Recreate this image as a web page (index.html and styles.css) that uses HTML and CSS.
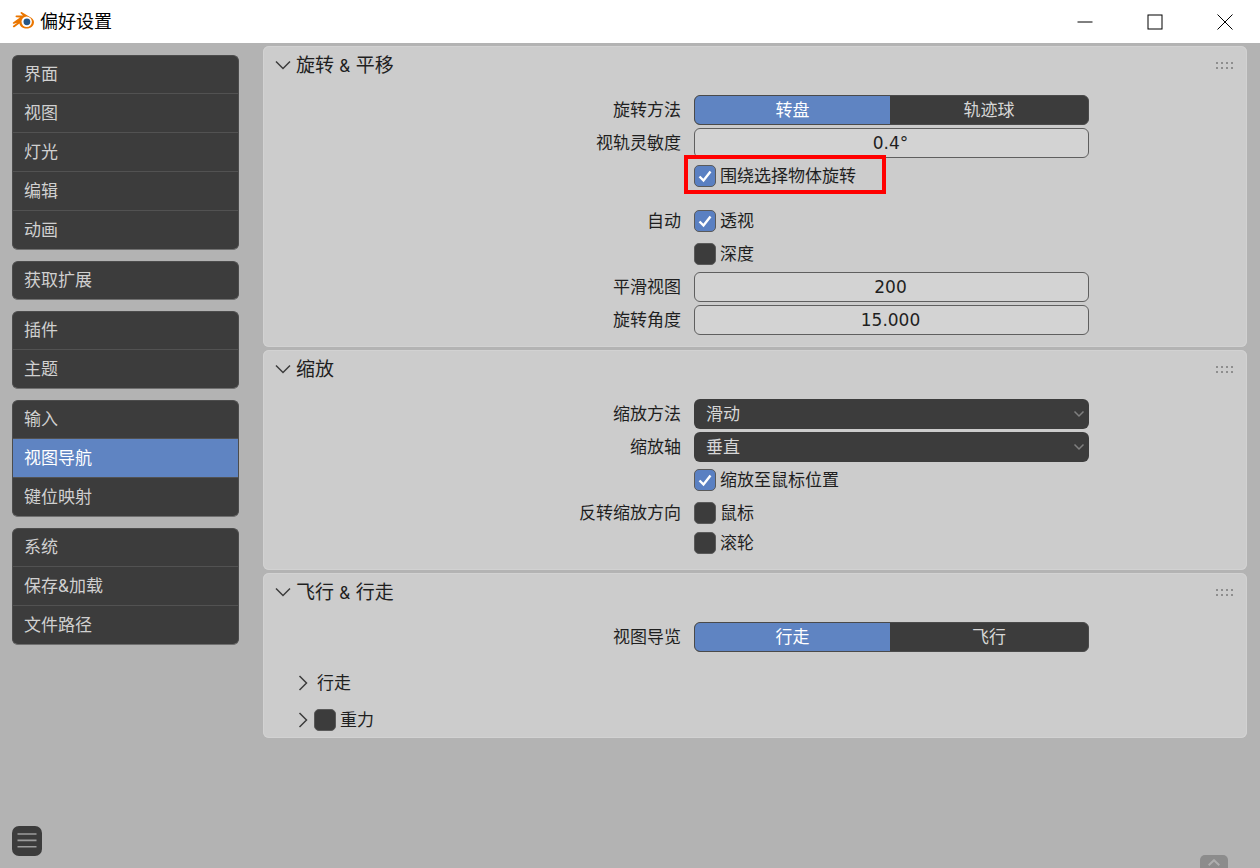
FILE: index.html
```html
<!DOCTYPE html>
<html lang="zh-CN">
<head>
<meta charset="utf-8">
<title>偏好设置</title>
<link rel="stylesheet" href="styles.css">
</head>
<body>
<header class="titlebar">
  <svg class="logo" viewBox="0 0 22 18" width="22" height="18">
    <path d="M1 11.5L8 6.5L4.3 6.3C3.3 6.2 3.3 4.6 4.3 4.5L11 4.5L8.8 2.6C8 1.8 9 0.6 10 1.2L17.5 5.8C20 7.2 22 8.8 22 11C22 14.8 18.8 17.6 14.7 17.6C11 17.6 8 15.6 7.4 12.6L2.4 16.2C1.4 16.8 0.3 15.6 1.2 14.8L5.3 11.8L2 12.8C1 13 0.4 12 1 11.5Z" fill="#ea7600"/>
    <circle cx="14.7" cy="10.8" r="5.2" fill="#fff"/>
    <circle cx="14.9" cy="10.8" r="3.4" fill="#265787"/>
  </svg>
  <span class="title">偏好设置</span>
  <div class="winctl">
    <svg viewBox="0 0 16 16" width="16" height="16"><path d="M0.5 8H15.5" stroke="#000" fill="none"/></svg>
    <svg viewBox="0 0 16 16" width="16" height="16"><rect x="1" y="1" width="14" height="14" stroke="#000" fill="none"/></svg>
    <svg viewBox="0 0 16 16" width="16" height="16"><path d="M0.5 0.5L15.5 15.5M15.5 0.5L0.5 15.5" stroke="#000" fill="none"/></svg>
  </div>
</header>
<div class="app">
  <nav class="sidebar">
    <div class="navgroup">
      <div class="navitem"><span>界面</span></div><div class="navitem"><span>视图</span></div><div class="navitem"><span>灯光</span></div><div class="navitem"><span>编辑</span></div><div class="navitem"><span>动画</span></div>
    </div>
    <div class="navgroup"><div class="navitem"><span>获取扩展</span></div></div>
    <div class="navgroup"><div class="navitem"><span>插件</span></div><div class="navitem"><span>主题</span></div></div>
    <div class="navgroup">
      <div class="navitem"><span>输入</span></div><div class="navitem active"><span>视图导航</span></div><div class="navitem"><span>键位映射</span></div>
    </div>
    <div class="navgroup">
      <div class="navitem"><span>系统</span></div><div class="navitem"><span>保存&amp;加载</span></div><div class="navitem"><span>文件路径</span></div>
    </div>
    <button class="menu-btn" aria-label="菜单">
      <svg viewBox="0 0 30 30" width="30" height="30"><path d="M5.5 8H24.5M5.5 14.4H24.5M5.5 20.8H24.5" stroke="#9c9c9c" stroke-width="1.6" fill="none"/></svg>
    </button>
  </nav>
  <main class="content">
    <section class="panel panel-rot">
      <div class="panel-head">
        <svg class="chev" viewBox="0 0 16 10" width="16" height="10"><path d="M1 1.5L8 8.5L15 1.5" stroke="#3c3c3c" stroke-width="1.5" fill="none"/></svg>
        <h2>旋转 <span class="amp">&amp;</span> 平移</h2>
        <svg class="grip" viewBox="0 0 18 7" width="18" height="7"><use href="#dots"/></svg>
      </div>
      <div class="row">
        <label>旋转方法</label>
        <div class="seg"><span class="on">转盘</span><span>轨迹球</span></div>
      </div>
      <div class="row">
        <label>视轨灵敏度</label>
        <div class="field">0.4°</div>
      </div>
      <div class="row">
        <label></label>
        <div class="check-wrap">
          <span class="box on"><svg viewBox="0 0 22 22" width="22" height="22"><path d="M5.5 11.5L9.5 15.5L16.5 6.5" stroke="#fff" stroke-width="2.4" fill="none"/></svg></span>
          <span class="check-text">围绕选择物体旋转</span>
          <span class="highlight"></span>
        </div>
      </div>
      <div class="row row-gap">
        <label>自动</label>
        <div class="check-wrap">
          <span class="box on"><svg viewBox="0 0 22 22" width="22" height="22"><path d="M5.5 11.5L9.5 15.5L16.5 6.5" stroke="#fff" stroke-width="2.4" fill="none"/></svg></span>
          <span class="check-text">透视</span>
        </div>
      </div>
      <div class="row">
        <label></label>
        <div class="check-wrap"><span class="box"></span><span class="check-text">深度</span></div>
      </div>
      <div class="row">
        <label>平滑视图</label>
        <div class="field">200</div>
      </div>
      <div class="row">
        <label>旋转角度</label>
        <div class="field">15.000</div>
      </div>
    </section>

    <section class="panel panel-zoom">
      <div class="panel-head">
        <svg class="chev" viewBox="0 0 16 10" width="16" height="10"><path d="M1 1.5L8 8.5L15 1.5" stroke="#3c3c3c" stroke-width="1.5" fill="none"/></svg>
        <h2>缩放</h2>
        <svg class="grip" viewBox="0 0 18 7" width="18" height="7"><use href="#dots"/></svg>
      </div>
      <div class="row">
        <label>缩放方法</label>
        <div class="select"><span>滑动</span><svg viewBox="0 0 12 8" width="12" height="8"><path d="M1.5 1.5L6 6L10.5 1.5" stroke="#808080" stroke-width="1.5" fill="none"/></svg></div>
      </div>
      <div class="row">
        <label>缩放轴</label>
        <div class="select"><span>垂直</span><svg viewBox="0 0 12 8" width="12" height="8"><path d="M1.5 1.5L6 6L10.5 1.5" stroke="#808080" stroke-width="1.5" fill="none"/></svg></div>
      </div>
      <div class="row">
        <label></label>
        <div class="check-wrap">
          <span class="box on"><svg viewBox="0 0 22 22" width="22" height="22"><path d="M5.5 11.5L9.5 15.5L16.5 6.5" stroke="#fff" stroke-width="2.4" fill="none"/></svg></span>
          <span class="check-text">缩放至鼠标位置</span>
        </div>
      </div>
      <div class="row">
        <label>反转缩放方向</label>
        <div class="check-wrap"><span class="box"></span><span class="check-text">鼠标</span></div>
      </div>
      <div class="row row-tight">
        <label></label>
        <div class="check-wrap"><span class="box"></span><span class="check-text">滚轮</span></div>
      </div>
    </section>

    <section class="panel panel-fly">
      <div class="panel-head">
        <svg class="chev" viewBox="0 0 16 10" width="16" height="10"><path d="M1 1.5L8 8.5L15 1.5" stroke="#3c3c3c" stroke-width="1.5" fill="none"/></svg>
        <h2>飞行 <span class="amp">&amp;</span> 行走</h2>
        <svg class="grip" viewBox="0 0 18 7" width="18" height="7"><use href="#dots"/></svg>
      </div>
      <div class="row">
        <label>视图导览</label>
        <div class="seg"><span class="on">行走</span><span>飞行</span></div>
      </div>
      <div class="sub sub-walk">
        <svg viewBox="0 0 10 16" width="10" height="16"><path d="M1.5 1L8.5 8L1.5 15" stroke="#3c3c3c" stroke-width="1.5" fill="none"/></svg>
        <span class="sub-text">行走</span>
      </div>
      <div class="sub sub-grav">
        <svg viewBox="0 0 10 16" width="10" height="16"><path d="M1.5 1L8.5 8L1.5 15" stroke="#3c3c3c" stroke-width="1.5" fill="none"/></svg>
        <span class="box"></span>
        <span class="sub-text">重力</span>
      </div>
    </section>
  </main>
</div>
<button class="up-tab" aria-label="展开">
  <svg viewBox="0 0 12 7" width="12" height="7"><path d="M0.7 6.2L6 1.2L11.3 6.2" stroke="#aeaeae" stroke-width="2" fill="none"/></svg>
</button>
<svg class="defs" width="0" height="0">
  <defs>
    <g id="dots" fill="#8e8e8e">
      <rect x="0" y="0" width="2" height="2"/><rect x="5" y="0" width="2" height="2"/><rect x="10" y="0" width="2" height="2"/><rect x="15" y="0" width="2" height="2"/>
      <rect x="0" y="5" width="2" height="2"/><rect x="5" y="5" width="2" height="2"/><rect x="10" y="5" width="2" height="2"/><rect x="15" y="5" width="2" height="2"/>
    </g>
  </defs>
</svg>
</body>
</html>
```
FILE: styles.css
```css
* { box-sizing: border-box; }
html, body { margin: 0; height: 100%; }
body {
  width: 1260px;
  height: 868px;
  overflow: hidden;
  position: relative;
  background: #b3b3b3;
  font-family: "Inter", "Noto Sans CJK SC", sans-serif;
  font-size: 17px;
  color: #1f1f1f;
  display: flex;
  flex-direction: column;
}
.defs { position: absolute; }

.titlebar {
  height: 43px;
  flex: none;
  background: #fff;
  display: flex;
  align-items: center;
  padding-left: 12px;
}
.logo { margin-right: 6px; margin-bottom: 4px; }
.title { font-size: 18px; color: #000; padding-bottom: 4px; }
.winctl { margin-left: auto; display: flex; gap: 54px; padding-right: 27px; }
.winctl svg { display: block; }

.app { flex: 1; display: flex; min-height: 0; }

.sidebar {
  width: 227px;
  margin-left: 12px;
  padding: 12px 0;
  display: flex;
  flex-direction: column;
  gap: 11px;
  flex: none;
}
.navgroup {
  background: #3c3c3c;
  border: 1px solid #4c4c4c;
  border-bottom-color: #707070;
  border-radius: 6px;
  overflow: hidden;
}
.navitem {
  height: 39px;
  padding-left: 11px;
  padding-bottom: 4px;
  display: flex;
  align-items: center;
  color: #d0d0d0;
  border-top: 1px solid #525252;
}
.navitem:first-child { border-top: 0; height: 37px; }
.navitem.active { background: #5f84c2; color: #fff; }

.menu-btn {
  margin-top: auto;
  width: 30px;
  height: 30px;
  padding: 0;
  border: 0;
  border-radius: 7px;
  background: #3c3c3c;
  display: block;
}
.menu-btn svg { display: block; }

.content {
  width: 984px;
  margin-left: 24px;
  padding-top: 3px;
  display: flex;
  flex-direction: column;
  gap: 3px;
  flex: none;
}
.panel {
  background: #cccccc;
  border-radius: 6px;
  box-shadow: inset 0 0 0 1px #d2d2d2;
}
.panel-rot { height: 301px; }
.panel-zoom { height: 220px; }
.panel-fly { height: 165px; }

.panel-head {
  height: 38px;
  padding: 0 14px 0 12px;
  display: flex;
  align-items: center;
  margin-bottom: 11px;
}
.panel-head h2 {
  margin: 0 0 0 5px;
  padding-bottom: 4px;
  font-size: 19px;
  font-weight: 400;
  color: #1f1f1f;
}
.amp { font-size: 17px; }
.grip { margin-left: auto; margin-right: -1px; }

.row {
  height: 30px;
  margin-bottom: 3px;
  display: flex;
  align-items: center;
}
.row label {
  width: 418px;
  text-align: right;
  color: #1f1f1f;
  margin-right: 13px;
  flex: none;
  padding-bottom: 3px;
}
.row-gap { margin-top: 15px; }
.row-tight { margin-top: -3px; }

.seg {
  width: 395px;
  height: 30px;
  display: flex;
  border: 1px solid #4a4a4a;
  border-radius: 6px;
  overflow: hidden;
  background: #3c3c3c;
  color: #d6d6d6;
  text-align: center;
}
.seg span { flex: 1; line-height: 29px; }
.seg span.on { background: #5f84c2; color: #fff; flex: none; width: 195px; }

.field {
  width: 395px;
  height: 30px;
  border: 1px solid #5f5f5f;
  border-radius: 6px;
  background: #d3d3d3;
  text-align: center;
  line-height: 28px;
  color: #1f1f1f;
  font-family: "DejaVu Sans", sans-serif;
  padding-right: 2px;
}

.select {
  width: 395px;
  height: 30px;
  border-radius: 6px;
  background: #3c3c3c;
  color: #d6d6d6;
  display: flex;
  align-items: center;
  justify-content: space-between;
  padding: 0 4px 0 12px;
}
.select span { padding-bottom: 3px; }

.check-wrap {
  position: relative;
  display: flex;
  align-items: center;
  height: 22px;
}
.box {
  width: 22px;
  height: 22px;
  border-radius: 5px;
  background: #3c3c3c;
  border: 1px solid #5a5a5a;
  flex: none;
  display: block;
  position: relative;
}
.box.on { background: #5a80c2; }
.box svg { position: absolute; left: -1px; top: -1px; }
.check-text { margin-left: 4px; padding-bottom: 3px; }

.highlight {
  position: absolute;
  left: -10px;
  top: -10px;
  width: 202px;
  height: 39px;
  border: 4px solid #ff0000;
}

.sub { display: flex; align-items: center; padding-left: 35px; }
.sub svg { flex: none; }
.sub-text { padding-bottom: 3px; }
.sub-walk { height: 24px; margin-top: 19px; }
.sub-walk .sub-text { margin-left: 9px; }
.sub-grav { height: 24px; margin-top: 13px; }
.sub-grav .box { margin-left: 6px; }
.sub-grav .sub-text { margin-left: 4px; }

.up-tab {
  position: absolute;
  left: 1200px;
  top: 855px;
  width: 28px;
  height: 13px;
  padding: 4px 0 0;
  border: 0;
  border-radius: 5px 5px 0 0;
  background: #8c8c8c;
  display: flex;
  justify-content: center;
  align-items: flex-start;
}
```
